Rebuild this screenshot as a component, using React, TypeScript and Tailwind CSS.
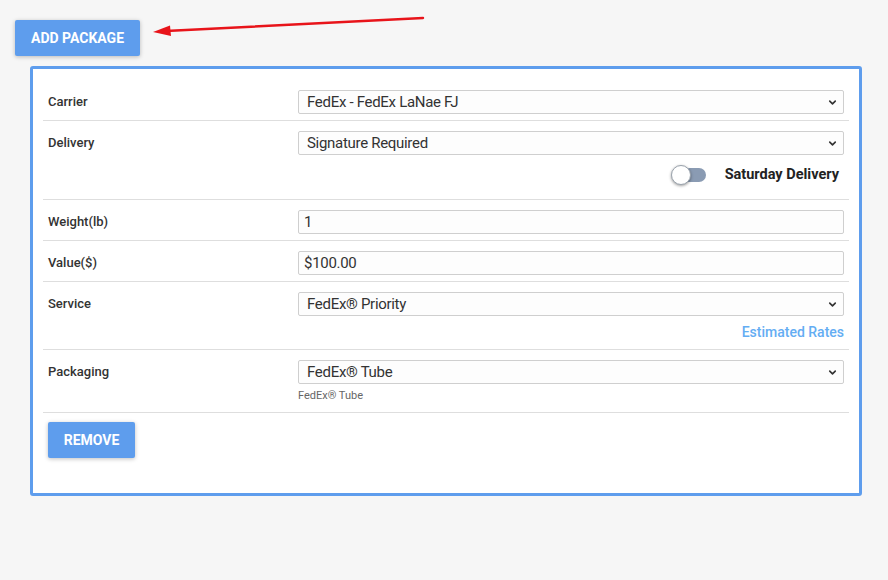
import { ChevronDown } from "lucide-react";

function Select({ value }: { value: string }) {
  return (
    <div className="relative h-[24px] w-full rounded-[2px] border border-[#cfcfcf] bg-[#fdfdfd]">
      <div className="flex h-full items-center pl-[8px] text-[15px] leading-none tracking-[-0.3px] text-[#333]">{value}</div>
      <ChevronDown className="absolute right-[5px] top-[6px] text-[#333]" size={11} strokeWidth={3.5} />
    </div>
  );
}

function Input({ value }: { value: string }) {
  return (
    <div className="flex h-[24px] w-full items-center rounded-[2px] border border-[#cfcfcf] bg-[#fdfdfd] pl-[5px] text-[15px] leading-none tracking-[-0.3px] text-[#333]">
      {value}
    </div>
  );
}

function Row({ label, children }: { label: string; children: React.ReactNode }) {
  return (
    <div className="flex border-b border-[#dedede] pb-[6px] pt-[10px]">
      <div className="flex h-[24px] w-[250px] shrink-0 items-center pl-[5px] text-[13px] font-medium text-[#333]">{label}</div>
      <div className="flex-1 px-[5px]">{children}</div>
    </div>
  );
}

export default function App() {
  return (
    <div className="relative min-h-screen bg-[#f6f6f6] font-['Roboto',sans-serif]">
      <div className="pl-[15px] pt-[20px]">
        <button className="h-[36px] w-[125px] rounded-[2px] bg-[#5e9ded] text-[14px] font-bold uppercase text-white shadow-[0_1px_4px_rgba(0,0,0,0.25)]">
          Add Package
        </button>
      </div>

      <div className="ml-[30px] mt-[10px] w-[832px] rounded-[3px] border-[3px] border-[#5e9ded] bg-white px-[10px] pb-[11px] pt-[11px]">
        <Row label="Carrier">
          <Select value="FedEx - FedEx LaNae FJ" />
        </Row>

        <div className="flex border-b border-[#dedede] pb-[9px] pt-[10px]">
          <div className="flex h-[24px] w-[250px] shrink-0 items-center pl-[5px] text-[13px] font-medium text-[#333]">Delivery</div>
          <div className="flex-1 px-[5px]">
            <Select value="Signature Required" />
            <div className="mt-[5px] flex h-[30px] items-center justify-end pr-[5px]">
              <div className="relative mr-[18px] h-[20px] w-[36px]">
                <div className="absolute left-[8px] top-[3px] h-[14px] w-[27px] rounded-full bg-[#8a9bb3]" />
                <div className="absolute left-0 top-0 h-[20px] w-[20px] rounded-full border border-[#9aa3ad] bg-white shadow-[0_1px_3px_rgba(0,0,0,0.4)]" />
              </div>
              <span className="text-[14.5px] font-bold text-[#222]">Saturday Delivery</span>
            </div>
          </div>
        </div>

        <Row label="Weight(lb)">
          <Input value="1" />
        </Row>

        <Row label="Value($)">
          <Input value="$100.00" />
        </Row>

        <div className="flex border-b border-[#dedede] pb-[8px] pt-[10px]">
          <div className="flex h-[24px] w-[250px] shrink-0 items-center pl-[5px] text-[13px] font-medium text-[#333]">Service</div>
          <div className="flex-1 px-[5px]">
            <Select value="FedEx® Priority" />
            <div className="mt-[8px] text-right text-[14px] font-medium leading-[17px] text-[#64adf3]">Estimated Rates</div>
          </div>
        </div>

        <div className="flex border-b border-[#dedede] pb-[9px] pt-[10px]">
          <div className="flex h-[24px] w-[250px] shrink-0 items-center pl-[5px] text-[13px] font-medium text-[#333]">Packaging</div>
          <div className="flex-1 px-[5px]">
            <Select value="FedEx® Tube" />
            <div className="mt-[5px] text-[11px] leading-[14px] text-[#666]">FedEx® Tube</div>
          </div>
        </div>

        <div className="pb-[24px] pl-[5px] pt-[9px]">
          <button className="h-[36px] w-[87px] rounded-[2px] bg-[#5e9ded] text-[14px] font-bold uppercase text-white shadow-[0_1px_4px_rgba(0,0,0,0.25)]">
            Remove
          </button>
        </div>
      </div>

      <svg className="pointer-events-none absolute left-0 top-0" width="888" height="60">
        <line x1="423" y1="18" x2="166" y2="31" stroke="#e8141a" strokeWidth="2.5" strokeLinecap="round" />
        <polygon points="153,32 170,25.5 171,36" fill="#e8141a" />
      </svg>
    </div>
  );
}
